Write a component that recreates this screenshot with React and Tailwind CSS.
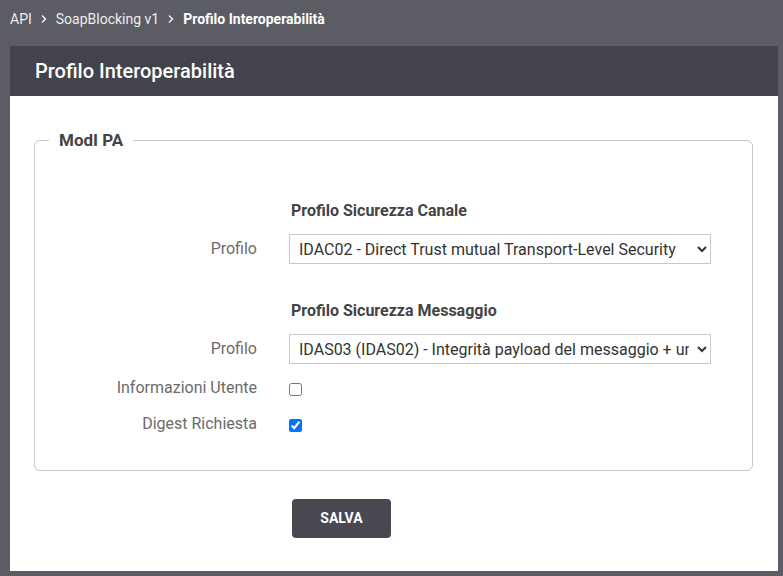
export default function App() {
  return (
    <div className="min-h-[576px] bg-[#5b5c64] font-['Roboto',sans-serif] pb-[5px]">
      <nav className="flex items-center h-[40px] px-[10px] text-[14px] text-[#eeeeee] pb-[2px]">
        <span>API</span>
        <Chevron />
        <span>SoapBlocking v1</span>
        <Chevron />
        <span className="font-bold text-white">Profilo Interoperabilità</span>
      </nav>
      <div className="mt-[6px] mx-[10px] mr-[5px] bg-white">
        <div className="h-[50px] bg-[#42434b] flex items-center px-[25px]">
          <h1 className="text-[20px] font-medium text-white">Profilo Interoperabilità</h1>
        </div>
        <div className="pt-[32px] pl-[24px] pr-[25px] pb-[33px]">
          <fieldset className="border border-[#c8c8c8] rounded-[6px] pt-[49px] pb-[34px] m-0">
            <legend className="ml-[14px] px-[10px] text-[17px] leading-[24px] font-bold text-[#444]">ModI PA</legend>
            <div className="grid grid-cols-[222px_422px] gap-x-[32px] items-center">
              <div />
              <h3 className="text-[16px] leading-[20px] font-bold text-[#444] pl-[2px]">Profilo Sicurezza Canale</h3>
              <label className="text-right text-[16px] text-[#6b6b6b] mt-[13px]">Profilo</label>
              <select className="mt-[13px] h-[30px] border border-[#c8c8c8] bg-white px-[5px] text-[16px] text-[#333]" defaultValue="a">
                <option value="a">IDAC02 - Direct Trust mutual Transport-Level Security</option>
              </select>
              <div />
              <h3 className="mt-[37px] text-[16px] leading-[20px] font-bold text-[#444] pl-[2px]">Profilo Sicurezza Messaggio</h3>
              <label className="text-right text-[16px] text-[#6b6b6b] mt-[13px]">Profilo</label>
              <select className="mt-[13px] h-[30px] border border-[#c8c8c8] bg-white px-[5px] text-[16px] text-[#333]" defaultValue="a">
                <option value="a">IDAS03 (IDAS02) - Integrità payload del messaggio + unicità del messaggio</option>
              </select>
              <label className="text-right text-[16px] leading-[24px] text-[#6b6b6b] mt-[12px]">Informazioni Utente</label>
              <div className="mt-[12px] h-[24px] flex items-center">
                <input type="checkbox" className="w-[13px] h-[13px] m-0 mt-[3px]" />
              </div>
              <label className="text-right text-[16px] leading-[24px] text-[#6b6b6b] mt-[12px]">Digest Richiesta</label>
              <div className="mt-[12px] h-[24px] flex items-center">
                <input type="checkbox" defaultChecked className="w-[13px] h-[13px] m-0 mt-[3px]" />
              </div>
            </div>
          </fieldset>
          <div className="mt-[28px] pl-[258px]">
            <button className="w-[99px] h-[39px] rounded-[4px] bg-[#484851] text-white text-[14px] font-bold">SALVA</button>
          </div>
        </div>
      </div>
    </div>
  );
}

function Chevron() {
  return (
    <svg className="mx-[8px]" width="8" height="10" viewBox="0 0 8 10" fill="none">
      <path d="M2 1.5 L5.5 5 L2 8.5" stroke="#eeeeee" strokeWidth="1.5" />
    </svg>
  );
}
